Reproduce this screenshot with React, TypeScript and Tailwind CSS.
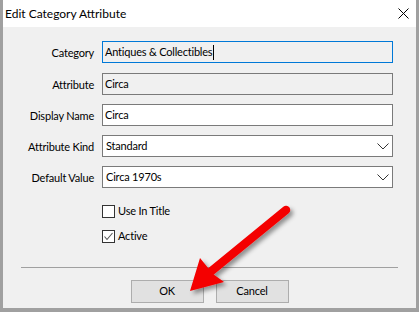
import React from "react";

function Chevron() {
  return (
    <svg width="12" height="7" viewBox="0 0 12 7" className="shrink-0">
      <polyline points="0.5,0.5 6,6 11.5,0.5" fill="none" stroke="#333" strokeWidth="1" />
    </svg>
  );
}

function Row({ label, children }: { label: string; children: React.ReactNode }) {
  return (
    <div className="flex items-center h-[22px]">
      <div className="w-[91px] text-right leading-none">{label}</div>
      <div className="ml-[8px] w-[291px] h-full">{children}</div>
    </div>
  );
}

export default function App() {
  return (
    <div
      className="relative w-[419px] h-[312px] bg-[#a0a0a0] pl-[3px] pr-[3px] pb-[4px] flex flex-col text-[11px] tracking-[-0.2px] text-black"
      style={{ fontFamily: 'Lato, "Noto Sans", sans-serif' }}
    >
      <div className="flex-1 flex flex-col bg-[#f0f0f0]">
        <div className="h-[27px] bg-white flex items-center justify-between pl-[2px] pr-[7px]">
          <span className="text-[12px] tracking-normal">Edit Category Attribute</span>
          <svg width="11" height="11" viewBox="0 0 11 11">
            <path d="M0.5 0.5 L10.5 10.5 M10.5 0.5 L0.5 10.5" stroke="#000" strokeWidth="1" />
          </svg>
        </div>

        <div className="flex flex-col mt-[14px]">
          <Row label="Category">
            <div className="h-full border border-[#0078d7] bg-[#f0f0f0] flex items-center pl-[2px]">
              <span>Antiques &amp; Collectibles</span>
              <span className="inline-block w-px h-[15px] bg-black ml-[1px]" />
            </div>
          </Row>
          <div className="mt-[10px]">
            <Row label="Attribute">
              <div className="h-full border border-[#7a7a7a] bg-[#f0f0f0] flex items-center pl-[2px]">Circa</div>
            </Row>
          </div>
          <div className="mt-[9px]">
            <Row label="Display Name">
              <div className="h-full border border-[#7a7a7a] bg-white flex items-center pl-[2px]">Circa</div>
            </Row>
          </div>
          <div className="mt-[9px]">
            <Row label="Attribute Kind">
              <div className="h-full border border-[#7a7a7a] bg-white flex items-center justify-between pl-[3px] pr-[3px]">
                <span>Standard</span>
                <Chevron />
              </div>
            </Row>
          </div>
          <div className="mt-[9px]">
            <Row label="Default Value">
              <div className="h-full border border-[#7a7a7a] bg-white flex items-center justify-between pl-[3px] pr-[3px]">
                <span>Circa 1970s</span>
                <Chevron />
              </div>
            </Row>
          </div>
        </div>

        <div className="flex flex-col ml-[99px] mt-[17px] gap-[12px]">
          <div className="flex items-center h-[13px]">
            <div className="w-[13px] h-[13px] border border-[#333] bg-white" />
            <span className="ml-[3px]">Use In Title</span>
          </div>
          <div className="flex items-center h-[13px]">
            <div className="w-[13px] h-[13px] border border-[#333] bg-white flex items-center justify-center">
              <svg width="11" height="11" viewBox="0 0 11 11">
                <polyline points="1.5,5.5 4,8.5 9.5,2" fill="none" stroke="#555" strokeWidth="1.1" />
              </svg>
            </div>
            <span className="ml-[3px]">Active</span>
          </div>
        </div>

        <div className="mx-[18px] mt-[24px] h-px bg-[#a0a0a0]" />

        <div className="flex justify-center gap-[12px] mt-[12px]">
          <button className="w-[73px] h-[23px] border border-[#adadad] bg-[#e1e1e1] text-[11px]">OK</button>
          <button className="w-[73px] h-[23px] border border-[#adadad] bg-[#e1e1e1] text-[11px]">Cancel</button>
        </div>
      </div>

      <svg
        className="absolute left-0 top-0 pointer-events-none"
        width="419"
        height="312"
        viewBox="0 0 419 312"
      >
        <defs>
          <filter id="sh" x="-20%" y="-20%" width="150%" height="150%">
            <feDropShadow dx="3" dy="3" stdDeviation="2" floodColor="#000" floodOpacity="0.4" />
          </filter>
        </defs>
        <g filter="url(#sh)">
          <line x1="286" y1="210" x2="209" y2="273" stroke="#f40000" strokeWidth="8.5" strokeLinecap="round" />
          <polygon points="200,258 190,291 224,282 213,274" fill="#f40000" />
        </g>
      </svg>
    </div>
  );
}
